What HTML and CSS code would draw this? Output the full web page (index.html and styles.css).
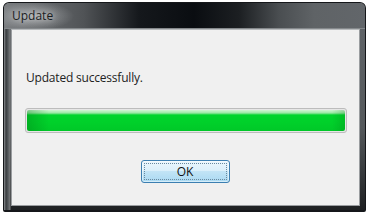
FILE: index.html
```html
<!DOCTYPE html>
<html lang="en">
<head>
<meta charset="UTF-8">
<title>Update</title>
<link rel="stylesheet" href="styles.css">
</head>
<body>
<div class="window">
  <div class="titlebar">
    <span class="title">Update</span>
  </div>
  <div class="client">
    <p class="message">Updated successfully.</p>
    <div class="progress">
      <div class="progress-fill"></div>
    </div>
    <div class="buttons">
      <button class="btn-ok"><span class="focus">OK</span></button>
    </div>
  </div>
</div>
</body>
</html>
```

FILE: styles.css
```css
body {
  margin: 0;
  background: #fff;
  font-family: "Open Sans", "Noto Sans", sans-serif;
}

.window {
  width: 363px;
  height: 210px;
  margin: 2px 0 0 3px;
  box-sizing: border-box;
  padding: 0 5px 4px 7px;
  display: flex;
  flex-direction: column;
  border-radius: 6px 6px 2px 2px;
  border: 1px solid #15171a;
  border-bottom-width: 2px;
  background:
    linear-gradient(90deg, #8c8f92 0, #3a3d40 2px, #54585b 4px, #77797b 6px, transparent 7px),
    linear-gradient(180deg, #62666a 0, #55595c 60%, #1e2022 100%);
}

.titlebar {
  height: 25px;
  display: flex;
  align-items: center;
  margin: 0 -5px 0 -7px;
  padding-left: 8px;
  border-radius: 5px 5px 0 0;
  background:
    radial-gradient(ellipse 40px 14px at 30px 13px, rgba(215, 218, 220, 0.5), transparent),
    linear-gradient(90deg, #7b7e81 0, #505356 80px, #15181c 135px, #0a0d11 190px, #1c1f22 235px, #4a4e51 275px, #5f6366 310px, #62666a 100%);
  border-bottom: 1px solid #85898c;
}

.title {
  font-size: 12px;
  color: #1b1d1f;
  text-shadow: 0 0 6px rgba(255, 255, 255, 0.8);
}

.client {
  flex: 1;
  background: #f0f0f0;
  border: 1px solid #9a9da0;
  border-top-color: #b8bbbd;
  padding: 0 12px 0 13px;
  display: flex;
  flex-direction: column;
}

.message {
  margin: 40px 0 0 1px;
  font-size: 12px;
  line-height: 16px;
  letter-spacing: -0.2px;
  color: #222;
}

.progress {
  margin-top: 22px;
  height: 25px;
  box-sizing: border-box;
  border: 1px solid #bcbcbc;
  border-radius: 3px;
  background: #e6e6e6;
  padding: 1px;
}

.progress-fill {
  height: 100%;
  border-radius: 2px;
  background:
    linear-gradient(90deg, rgba(0, 120, 20, 0.35) 0, transparent 22px, transparent 305px, rgba(0, 120, 20, 0.25) 100%),
    linear-gradient(180deg, #d2f5d4 0, #9ae8a4 3px, #00d42c 5px, #00d02a 60%, #00c828 100%);
}

.buttons {
  display: flex;
  justify-content: center;
  margin-top: 27px;
  padding-right: 2px;
}

.btn-ok {
  width: 89px;
  height: 23px;
  padding: 2px;
  border: 1px solid #3c7fb1;
  border-radius: 3px;
  background: linear-gradient(180deg, #ecf7fd 0, #dcf0fb 45%, #c2e4f6 50%, #a9d9f2 100%);
  box-shadow: inset 0 0 0 1px rgba(255, 255, 255, 0.5);
  font-family: "Open Sans", "Noto Sans", sans-serif;
  font-size: 12px;
  color: #111;
}

.btn-ok .focus {
  display: flex;
  align-items: center;
  justify-content: center;
  height: 100%;
  border: 1px dotted #6a8aa0;
  box-sizing: border-box;
}
```
